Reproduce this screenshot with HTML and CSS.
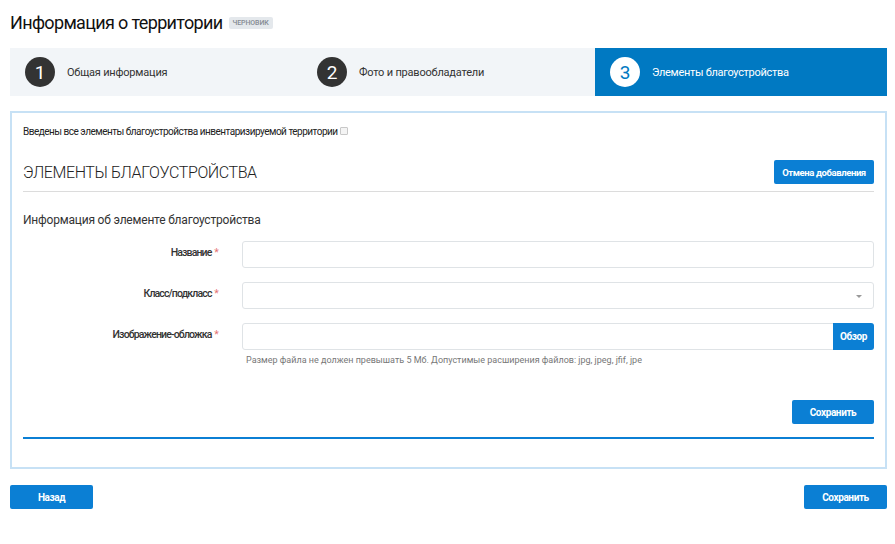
FILE: index.html
```html
<!DOCTYPE html>
<html lang="ru">
<head>
<meta charset="utf-8">
<link rel="stylesheet" href="styles.css">
</head>
<body>
<div class="page">
  <div class="title-row">
    <h1 class="title">Информация о территории</h1>
    <span class="badge">ЧЕРНОВИК</span>
  </div>
  <div class="steps">
    <div class="step"><span class="num">1</span><span class="step-label">Общая информация</span></div>
    <div class="step"><span class="num">2</span><span class="step-label">Фото и правообладатели</span></div>
    <div class="step active"><span class="num">3</span><span class="step-label">Элементы благоустройства</span></div>
  </div>
  <div class="panel">
    <div class="check-row">Введены все элементы благоустройства инвентаризируемой территории<span class="checkbox"></span></div>
    <div class="section-head">
      <h2 class="section-title">ЭЛЕМЕНТЫ БЛАГОУСТРОЙСТВА</h2>
      <button class="btn btn-sm">Отмена добавления</button>
    </div>
    <div class="sub-title">Информация об элементе благоустройства</div>
    <div class="form">
      <div class="row">
        <label class="label">Название <span class="req">*</span></label>
        <div class="field"><div class="input"></div></div>
      </div>
      <div class="row">
        <label class="label">Класс/подкласс <span class="req">*</span></label>
        <div class="field"><div class="input select"><span class="caret"></span></div></div>
      </div>
      <div class="row">
        <label class="label">Изображение-обложка <span class="req">*</span></label>
        <div class="field">
          <div class="input file"><span class="browse">Обзор</span></div>
          <div class="help">Размер файла не должен превышать 5 Мб. Допустимые расширения файлов: jpg, jpeg, jfif, jpe</div>
        </div>
      </div>
    </div>
    <div class="save-row"><button class="btn btn-save">Сохранить</button></div>
    <div class="blue-line"></div>
  </div>
  <div class="footer">
    <button class="btn btn-foot">Назад</button>
    <button class="btn btn-foot">Сохранить</button>
  </div>
</div>
</body>
</html>
```
FILE: styles.css
```css
* { box-sizing: border-box; }
body {
  margin: 0;
  background: #fff;
  font-family: Roboto, "Liberation Sans", sans-serif;
  color: #222;
}
.page { padding: 0 8px 0 10px; }
.title-row {
  display: flex;
  align-items: center;
  height: 48px;
  padding-bottom: 4px;
}
.title {
  margin: 0;
  font-size: 18px;
  font-weight: 400;
  letter-spacing: -0.65px;
  color: #111;
}
.badge {
  margin-left: 6px;
  margin-top: 2px;
  background: #e4e8ec;
  color: #858b93;
  font-size: 7px;
  font-weight: 500;
  letter-spacing: -0.1px;
  padding: 2px 4px;
  border-radius: 2px;
}
.steps {
  display: grid;
  grid-template-columns: 292px 293px 1fr;
  height: 48px;
  background: #f2f5f8;
}
.step {
  display: flex;
  align-items: center;
  padding-left: 15px;
}
.num {
  width: 30px;
  height: 30px;
  border-radius: 50%;
  background: #333;
  color: #fff;
  font-size: 19px;
  display: flex;
  align-items: center;
  justify-content: center;
  margin-right: 12px;
}
.step-label {
  font-size: 11px;
  color: #333;
  letter-spacing: -0.2px;
}
.step.active { background: #0079c2; }
.step.active .num { background: #fff; color: #0079c2; }
.step.active .step-label { color: #fff; letter-spacing: -0.3px; }
.panel {
  margin-top: 15px;
  border: 2px solid #c7e1f5;
  padding: 10px 11px 27px 11px;
  height: 358px;
}
.check-row {
  font-size: 10px;
  letter-spacing: -0.5px;
  color: #222;
  display: flex;
  align-items: center;
  height: 16px;
}
.checkbox {
  display: inline-block;
  width: 8px;
  height: 8px;
  border: 1px solid #c8c8c8;
  background: #f4f4f4;
  margin-left: 2px;
  border-radius: 1px;
}
.section-head {
  display: flex;
  justify-content: space-between;
  align-items: center;
  margin-top: 21px;
  padding-bottom: 7px;
  border-bottom: 1px solid #dcdcdc;
}
.section-title {
  margin: 0;
  font-size: 16px;
  font-weight: 300;
  letter-spacing: -0.4px;
  color: #222;
}
.btn {
  border: none;
  background: #0b7fd4;
  color: #fff;
  font-family: Roboto, "Liberation Sans", sans-serif;
  font-weight: 700;
  border-radius: 2px;
  padding: 0;
  letter-spacing: -0.4px;
}
.btn-sm { width: 100px; height: 24px; font-size: 9.5px; }
.sub-title {
  margin-top: 21px;
  font-size: 12px;
  color: #333;
  letter-spacing: -0.2px;
}
.form { margin-top: 14px; }
.row {
  display: flex;
  margin-bottom: 14px;
}
.label {
  width: 195px;
  text-align: right;
  font-size: 10.5px;
  font-weight: 500;
  color: #333;
  letter-spacing: -0.85px;
  padding-top: 5px;
}
.req { color: #e57373; font-weight: 400; margin-left: 1px; }
.field { margin-left: 24px; flex: 1; }
.input {
  height: 27px;
  border: 1px solid #dfe3e6;
  border-radius: 3px;
  background: #fff;
  position: relative;
}
.select .caret {
  position: absolute;
  right: 11px;
  top: 12px;
  border-left: 3px solid transparent;
  border-right: 3px solid transparent;
  border-top: 3px solid #999;
}
.file { display: flex; justify-content: flex-end; }
.browse {
  background: #0b7fd4;
  color: #fff;
  font-size: 10px;
  font-weight: 700;
  letter-spacing: -0.4px;
  width: 41px;
  margin: -1px -1px -1px 0;
  border-radius: 0 3px 3px 0;
  display: flex;
  align-items: center;
  justify-content: center;
}
.help {
  margin-top: 5px;
  margin-left: 4px;
  font-size: 9px;
  color: #777;
  letter-spacing: 0;
}
.save-row {
  display: flex;
  justify-content: flex-end;
  margin-top: 35px;
}
.btn-save { width: 82px; height: 24px; font-size: 10px; }
.blue-line {
  margin-top: 13px;
  height: 2px;
  background: #0b7fd4;
}
.footer {
  display: flex;
  justify-content: space-between;
  margin-top: 16px;
}
.btn-foot { width: 83px; height: 24px; font-size: 10px; }
```
